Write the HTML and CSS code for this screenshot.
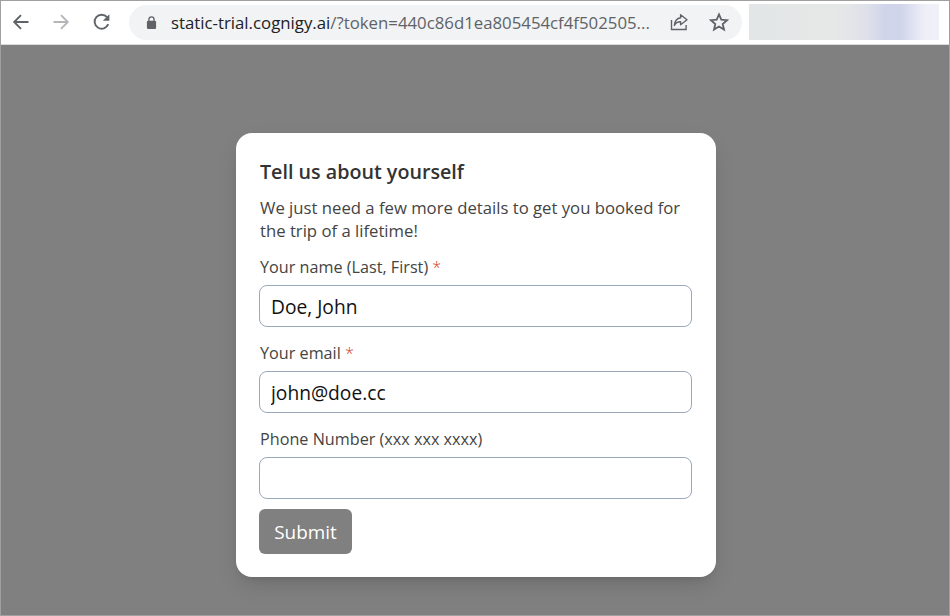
FILE: index.html
```html
<!DOCTYPE html>
<html lang="en">
<head>
<meta charset="utf-8">
<title>Tell us about yourself</title>
<link rel="stylesheet" href="styles.css">
</head>
<body>
<div class="window">
  <header class="toolbar">
    <div class="nav">
      <svg class="nav-icon" viewBox="0 0 20 20"><path d="M17.500 10H3.600M10 3.200 3.200 10l6.800 6.800" fill="none" stroke="#5f6368" stroke-width="1.900"/></svg>
      <svg class="nav-icon" viewBox="0 0 20 20"><path d="M2.500 10h13.900M10 3.200l6.800 6.800-6.800 6.800" fill="none" stroke="#b4b6b9" stroke-width="1.900"/></svg>
      <svg class="nav-icon nav-reload" viewBox="0 0 20 20"><path d="M16.200 12.200A7 7 0 1 1 15 5.200" fill="none" stroke="#5f6368" stroke-width="1.900"/><path d="M17.400 2.200v6.600h-6.600z" fill="#5f6368"/></svg>
    </div>
    <div class="omnibox">
      <svg class="lock" viewBox="0 0 12 16"><path d="M3.200 6.500V4.600a2.800 2.800 0 0 1 5.600 0v1.900" fill="none" stroke="#5f6368" stroke-width="1.400"/><rect x="1" y="6" width="10" height="9" rx="1.400" fill="#5f6368"/></svg>
      <div class="url"><span class="host">static-trial.cognigy.ai</span>/?token=440c86d1ea805454cf4f502505...</div>
      <svg class="omni-icon" viewBox="0 0 20 20"><path d="M2.500 8v9.500h14.600V13" fill="none" stroke="#5f6368" stroke-width="1.400"/><path d="M11.600 2.800 18 7.800l-6.400 5v-3c-3 0-5 1-6.200 3.600C5.800 9.500 8 6.200 11.600 5.800z" fill="none" stroke="#5f6368" stroke-width="1.400" stroke-linejoin="round"/></svg>
      <svg class="omni-icon star" viewBox="0 0 20 20"><path d="m10 2.400 2.300 5.300 5.700.5-4.300 3.800 1.300 5.600-5-3-5 3 1.300-5.600L2 8.200l5.700-.5z" fill="none" stroke="#5f6368" stroke-width="1.800"/></svg>
    </div>
    <div class="blurred"></div>
  </header>
  <main class="page">
    <form class="card">
      <h1 class="title">Tell us about yourself</h1>
      <p class="intro">We just need a few more details to get you booked for the trip of a lifetime!</p>
      <div class="field">
        <label class="label" for="name">Your name (Last, First) <span class="req">*</span></label>
        <input class="input" id="name" type="text" value="Doe, John">
      </div>
      <div class="field">
        <label class="label" for="email">Your email <span class="req">*</span></label>
        <input class="input" id="email" type="text" value="john@doe.cc">
      </div>
      <div class="field">
        <label class="label" for="phone">Phone Number (xxx xxx xxxx)</label>
        <input class="input" id="phone" type="text">
      </div>
      <button class="submit" type="button">Submit</button>
    </form>
  </main>
</div>
</body>
</html>
```
FILE: styles.css
```css
* { box-sizing: border-box; }
html, body { margin: 0; padding: 0; }
body { width: 950px; height: 616px; overflow: hidden; font-family: "Open Sans", "Noto Sans", sans-serif; }
.window { width: 950px; height: 616px; border: 1px solid #a0a0a0; display: flex; flex-direction: column; background: #808080; }
.toolbar { height: 44px; flex: none; background: #fff; border-bottom: 1px solid #d9dadc; display: flex; align-items: center; padding: 0 9px 1px 10px; }
.nav { display: flex; gap: 20px; align-items: center; }
.nav-icon { width: 20px; height: 20px; display: block; }
.nav-reload { margin-left: 1px; }
.omnibox { margin-left: 17px; width: 613px; height: 35px; background: #f1f3f4; border-radius: 18px; display: flex; align-items: center; padding: 0 13px 0 17px; }
.lock { width: 11px; height: 15px; flex: none; }
.url { margin-left: 14px; width: 484px; font-size: 16.8px; white-space: nowrap; color: #5f6368; flex: none; overflow: hidden; }
.host { color: #202124; }
.omni-icon { width: 20px; height: 20px; flex: none; margin-left: 14px; }
.star { margin-left: 20px; }
.blurred { margin-left: 7px; width: 190px; height: 36px; background: linear-gradient(90deg, #e2e6e6 0%, #e6e8e7 45%, #dfe1ea 62%, #cfd4ea 72%, #d0d5ea 80%, #edeef7 92%, #f0f1f8 100%); }
.page { flex: 1; display: flex; justify-content: center; padding: 88px 0 0 2px; }
.card { width: 480px; height: 444px; background: #fff; border-radius: 16px; padding: 25px 24px 23px 23px; box-shadow: 0 10px 25px -5px rgba(0,0,0,.16), 0 5px 10px -5px rgba(0,0,0,.1); }
.title { margin: 0; padding-left: 1px; font-size: 19.7px; line-height: 27px; font-weight: 600; color: #333; }
.intro { margin: 11px 0 0; padding-left: 1px; font-size: 16.7px; line-height: 23px; color: #444; }
.field { margin-top: 14px; }
.field + .field { margin-top: 15px; }
.label { display: block; padding-left: 1px; font-size: 16.2px; line-height: 23px; color: #444; margin-bottom: 6px; }
.req { color: #d8452e; font-weight: 300; }
.input { display: block; width: 433px; height: 42px; border: 1px solid #9aa8bc; border-radius: 8px; padding: 0 11px; font: 19.2px "Open Sans", "Noto Sans", sans-serif; color: #111; background: #fff; outline: none; }
.submit { display: block; margin-top: 10px; width: 93px; height: 45px; border: 0; border-radius: 6px; background: #808080; color: #fff; font: 18.9px "Open Sans", "Noto Sans", sans-serif; padding: 0; }
```
